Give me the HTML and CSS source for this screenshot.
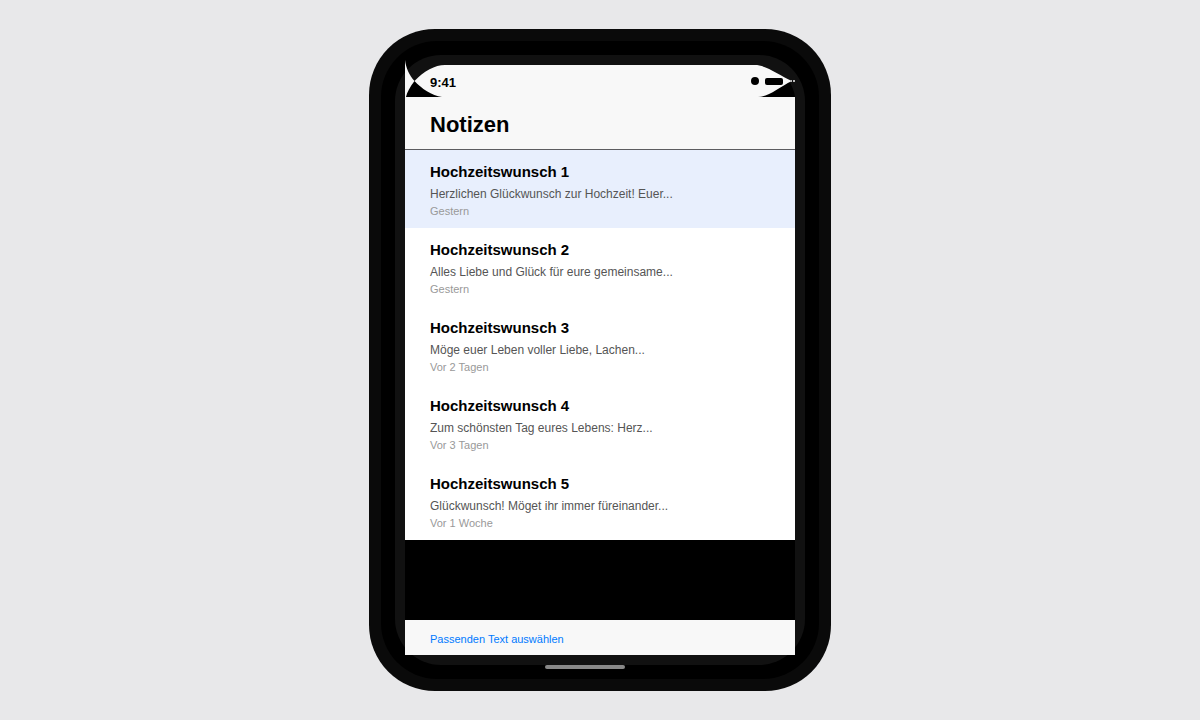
FILE: index.html
```html
<!DOCTYPE html>
<html lang="de">
  <head>
    <meta charset="UTF-8" />
    <meta name="viewport" content="width=device-width, initial-scale=1.0" />
    <title>Notizen</title>
    <link rel="stylesheet" href="styles.css">
  </head>
  <body>
    <div class="phone">
      <div class="bezel">
        <div class="frame">
          <div class="status-bar">
            <svg class="status-shape" viewBox="0 0 390 37" preserveAspectRatio="none" aria-hidden="true">
              <path d="M0 37 L9 21 H384 Q389 29 390 37 Z" fill="#000" />
              <path d="M0 0 C1 8 4 15 9.500 21 C5 27 2 32 1 37 H0 Z" fill="#f8f8f8" />
              <path d="M9.500 21 C19 11 30 5 40 5 H350 C361 5 374 15 387 21 C374 27 364 37 353 37 H37 C27 36 16 28 9.500 21 Z" fill="#f8f8f8" />
              <path d="M386 20 H387 V22 H386 Z M388 20 H390 V22 H388 Z" fill="#bbb" />
            </svg>
            <span class="time">9:41</span>
            <span class="status-icons">
              <span class="signal"></span>
              <span class="battery"></span>
            </span>
          </div>
          <header class="header">
            <h1>Notizen</h1>
          </header>
          <main class="content">
            <ul class="notes">
              <li class="note selected">
                <h2>Hochzeitswunsch 1</h2>
                <p>Herzlichen Glückwunsch zur Hochzeit! Euer...</p>
                <span class="date">Gestern</span>
              </li>
              <li class="note">
                <h2>Hochzeitswunsch 2</h2>
                <p>Alles Liebe und Glück für eure gemeinsame...</p>
                <span class="date">Gestern</span>
              </li>
              <li class="note">
                <h2>Hochzeitswunsch 3</h2>
                <p>Möge euer Leben voller Liebe, Lachen...</p>
                <span class="date">Vor 2 Tagen</span>
              </li>
              <li class="note">
                <h2>Hochzeitswunsch 4</h2>
                <p>Zum schönsten Tag eures Lebens: Herz...</p>
                <span class="date">Vor 3 Tagen</span>
              </li>
              <li class="note">
                <h2>Hochzeitswunsch 5</h2>
                <p>Glückwunsch! Möget ihr immer füreinander...</p>
                <span class="date">Vor 1 Woche</span>
              </li>
            </ul>
          </main>
          <footer class="toolbar">
            <button type="button">Passenden Text auswählen</button>
          </footer>
        </div>
        <div class="home-indicator"></div>
      </div>
    </div>
  </body>
</html>
```

FILE: styles.css
```css
* {
  box-sizing: border-box;
}

body {
  font-family: Helvetica, "Liberation Sans", Arial, sans-serif;
  margin: 0;
  background-color: #e8e8ea;
  display: flex;
  align-items: center;
  justify-content: center;
  min-height: 100vh;
}

.phone {
  width: 100%;
  max-width: 462px;
  padding: 12px;
  background-color: #0a0a0a;
  border-radius: 66px;
}

.bezel {
  position: relative;
  padding: 14px;
  background-color: #000;
  border-radius: 56px;
}

.frame {
  padding: 10px;
  background-color: #111;
  border-radius: 46px;
}

.status-bar {
  position: relative;
  display: flex;
  align-items: center;
  justify-content: space-between;
  height: 32px;
  padding: 3px 12px 0 25px;
}

/* curved shape behind the clock, slightly taller than the bar */
.status-shape {
  position: absolute;
  left: 0;
  bottom: 0;
  width: 100%;
  height: 37px;
}

.time {
  position: relative;
  font-size: 13px;
  font-weight: bold;
}

.status-icons {
  position: relative;
  display: flex;
  align-items: center;
  gap: 6px;
  padding-bottom: 3px;
}

.signal {
  width: 8px;
  height: 8px;
  border-radius: 50%;
  background-color: #000;
}

.battery {
  width: 18px;
  height: 7px;
  border-radius: 2px;
  background-color: #000;
}

.header {
  padding: 15px 25px 12px;
  background-color: #f8f8f8;
  border-bottom: 1px solid #5c5c60;
}

h1 {
  margin: 0;
  font-size: 22px;
  line-height: 25px;
}

.content {
  padding-bottom: 80px;
  background-color: #000;
}

.notes {
  list-style: none;
  margin: 0;
  padding: 0;
}

.note {
  height: 78px;
  padding: 12px 25px 8px;
  background-color: #fff;
}

.note.selected {
  background-color: #e8effd;
}

h2 {
  margin: 0 0 5px;
  font-size: 15px;
  line-height: 20px;
}

.note p {
  margin: 0 0 2px;
  color: #555;
  font-size: 12px;
  line-height: 15px;
}

.date {
  display: block;
  color: #999;
  font-size: 11px;
  line-height: 15px;
}

.toolbar {
  display: flex;
  align-items: center;
  height: 35px;
  padding: 3px 25px 0;
  background-color: #f8f8f8;
}

.toolbar button {
  padding: 0;
  border: none;
  background: none;
  color: #007aff;
  font-family: inherit;
  font-size: 11px;
  cursor: pointer;
}

.home-indicator {
  position: absolute;
  left: 164px;
  bottom: 10px;
  width: 80px;
  height: 4px;
  border-radius: 2px;
  background-color: #888;
}
```
